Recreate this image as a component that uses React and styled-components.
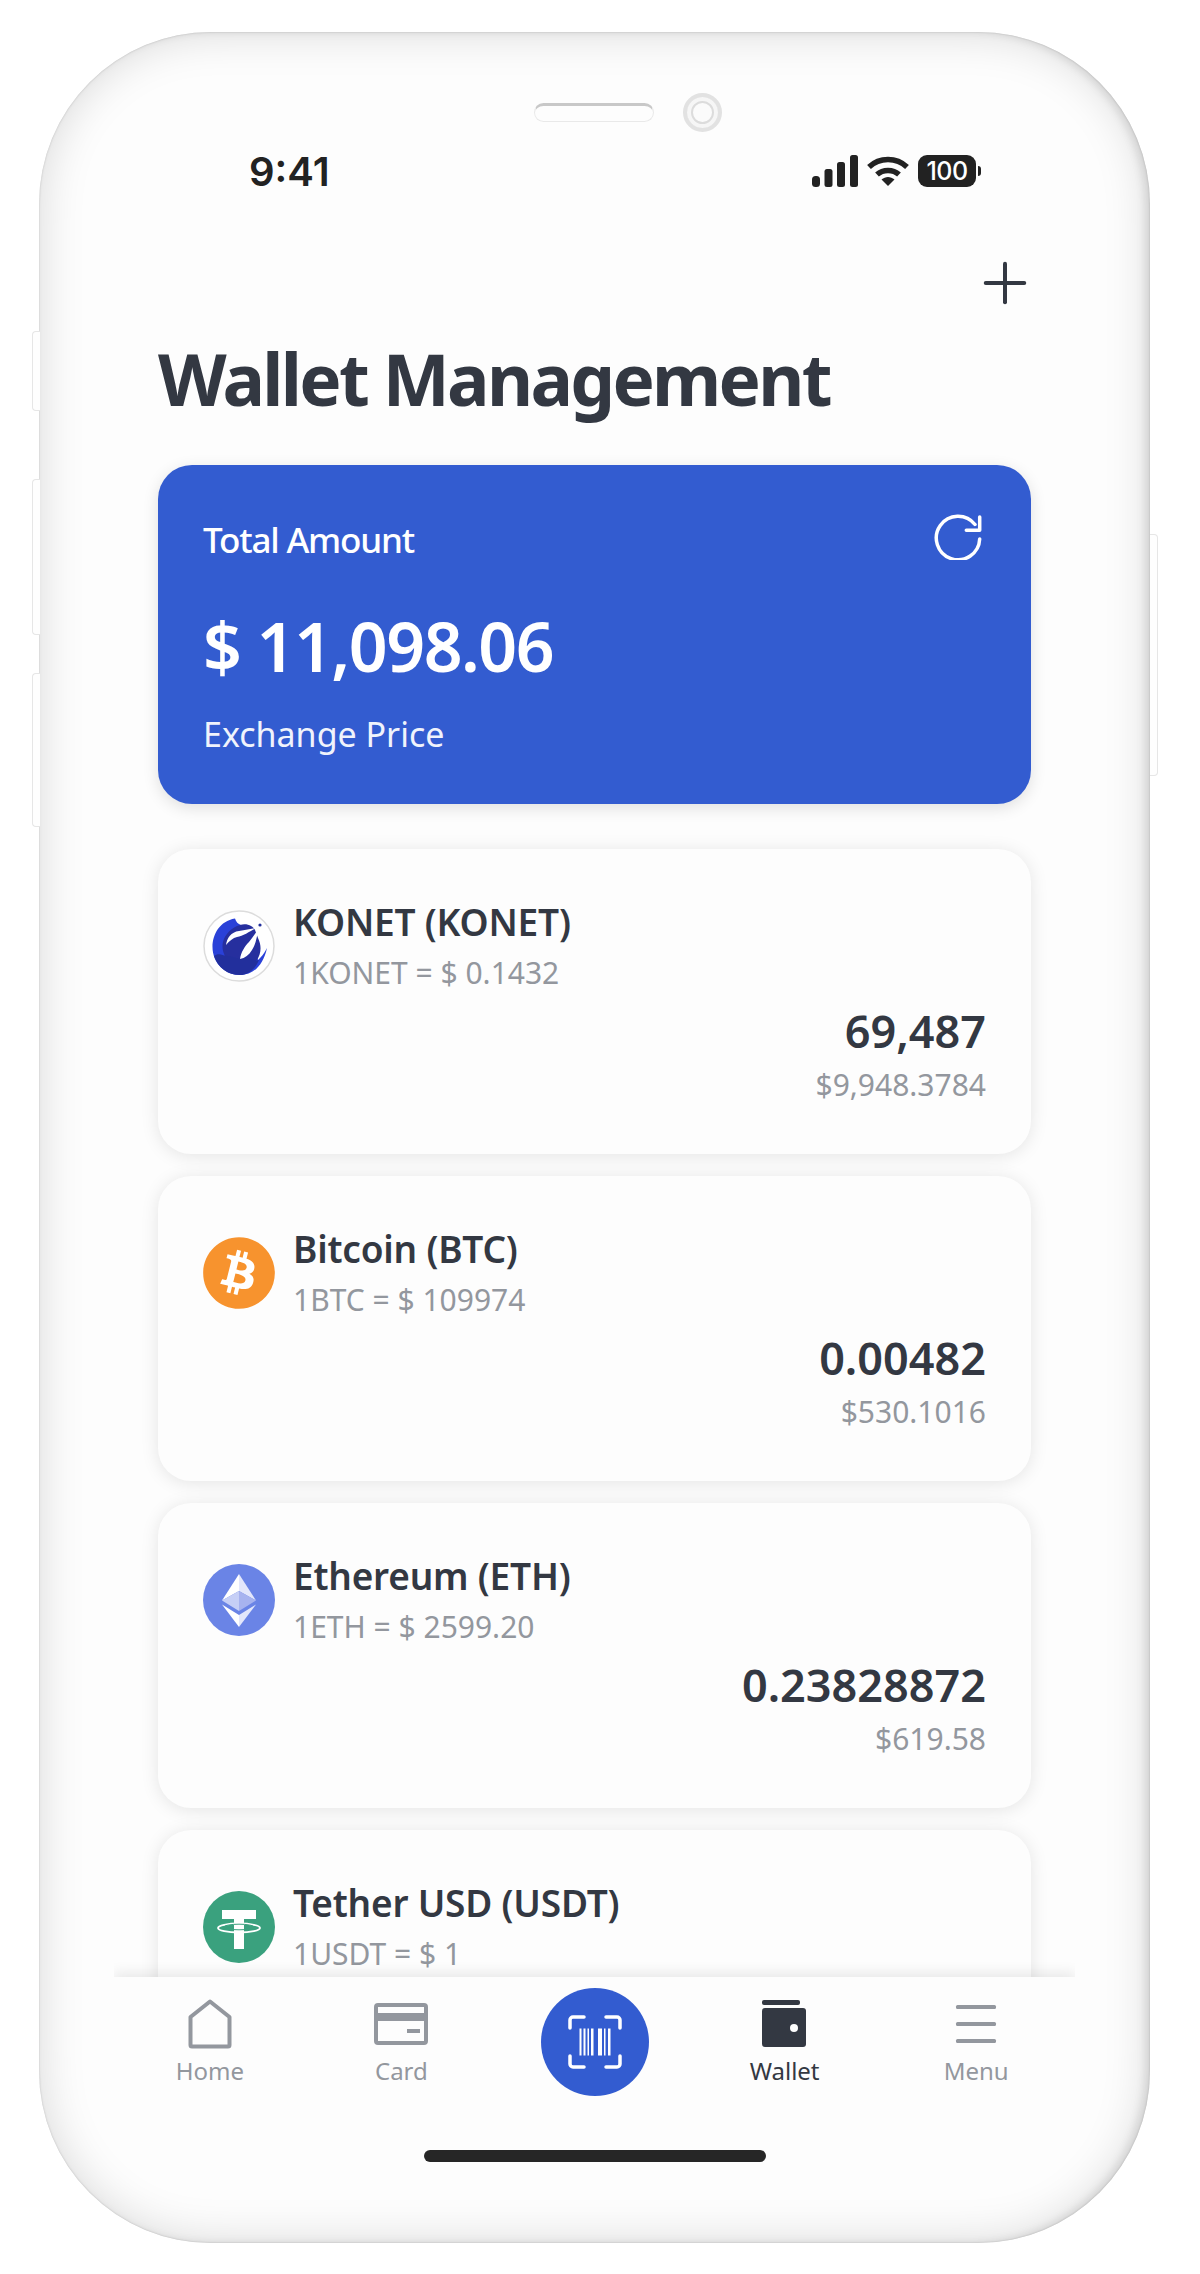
import React from 'react'
import styled, { createGlobalStyle } from 'styled-components'
import { FaBitcoin } from 'react-icons/fa'
import { Plus } from 'lucide-react'

const GlobalStyle = createGlobalStyle`
  html, body { margin: 0; padding: 0; background: #fff; }
  body { font-family: "Noto Sans", "Open Sans", sans-serif; color: #333842; }
  * { box-sizing: border-box; }
`

const Page = styled.div`
  width: 1200px;
  height: 2274px;
  padding: 32px 50px 31px 39px;
  overflow: hidden;
`

const Phone = styled.div`
  position: relative;
  height: 100%;
  padding: 0 75px;
  border-radius: 172px;
  background: #fdfdfd;
  box-shadow:
    inset 0 0 46px rgba(0, 0, 0, 0.15),
    inset -5px 0 9px rgba(0, 0, 0, 0.1),
    inset 0 0 2px rgba(0, 0, 0, 0.2);
  display: flex;
  flex-direction: column;
`

const SideButton = styled.span`
  position: absolute;
  top: ${p => p.$top}px;
  height: ${p => p.$height}px;
  width: 8px;
  background: #fefefe;
  border: 1px solid #e6e6e6;
  ${p => (p.$right
    ? 'right: -8px; border-left: 0; border-radius: 0 4px 4px 0;'
    : 'left: -7px; border-right: 0; border-radius: 4px 0 0 4px;')}
`

const Sensors = styled.div`
  flex: none;
  height: 39px;
  margin: 61px 0 0 66px;
  display: flex;
  align-items: center;
  justify-content: center;
  gap: 29px;
`

const Speaker = styled.span`
  width: 120px;
  height: 19px;
  border-radius: 10px;
  background: #fdfdfd;
  border: 1px solid #e9e9e9;
  border-top: 3px solid #c8c8c8;
`

const Camera = styled.span`
  width: 39px;
  height: 39px;
  border-radius: 50%;
  border: 4px solid #e2e2e2;
  background: #fbfbfb;
  box-shadow: inset 0 0 0 4px #f6f6f6, inset 0 0 0 6px #dcdcdc;
`

const StatusBar = styled.div`
  flex: none;
  display: flex;
  align-items: center;
  justify-content: space-between;
  padding: 0 99px 0 135px;
  height: 48px;
  margin-top: 15px;
`

const Time = styled.span`
  font-family: Inter, sans-serif;
  font-size: 40px;
  font-weight: 600;
  color: #222;
`

const StatusIcons = styled.div`
  display: flex;
  align-items: center;
  gap: 8px;
`

const Battery = styled.span`
  width: 58px;
  height: 32px;
  border-radius: 9px;
  background: #222;
  color: #fff;
  font-family: Inter, sans-serif;
  font-size: 25px;
  font-weight: 500;
  letter-spacing: -0.5px;
  display: flex;
  align-items: center;
  justify-content: center;
  position: relative;
  &::after {
    content: '';
    position: absolute;
    right: -5px;
    top: 11px;
    width: 3px;
    height: 10px;
    border-radius: 0 3px 3px 0;
    background: #222;
  }
`

const Content = styled.div`
  padding: 0 44px;
  flex: 1;
  min-height: 0;
  overflow: hidden;
  display: flex;
  flex-direction: column;
`

const AddRow = styled.div`
  flex: none;
  display: flex;
  justify-content: flex-end;
  height: 66px;
  margin: 55px -7px 0 0;
  color: #333842;
`

const Title = styled.h1`
  flex: none;
  margin: 15px 0 0;
  font-size: 71px;
  line-height: 96px;
  font-weight: 700;
  letter-spacing: -2.7px;
  color: #333842;
`

const TotalCard = styled.section`
  flex: none;
  margin-top: 38px;
  height: 339px;
  padding: 44px 44px 0 45px;
  border-radius: 34px;
  background: #335cd0;
  color: #fff;
  box-shadow: 0 4px 16px rgba(0, 0, 0, 0.12);
`

const TotalTop = styled.div`
  display: flex;
  align-items: center;
  justify-content: space-between;
  height: 60px;
`

const TotalLabel = styled.span`
  font-size: 35px;
  font-weight: 500;
  letter-spacing: -1.2px;
`

const TotalValue = styled.div`
  margin-top: 32px;
  font-size: 68px;
  line-height: 90px;
  font-weight: 600;
  letter-spacing: -1.5px;
`

const TotalNote = styled.div`
  margin-top: 20px;
  font-size: 34px;
  line-height: 46px;
  font-weight: 400;
  color: #f0f3fc;
`

const RefreshIcon = styled.svg`
  flex: none;
  margin: 0 5px 6px 0;
`

const CoinList = styled.div`
  flex: none;
  display: flex;
  flex-direction: column;
  gap: 22px;
  margin-top: 45px;
`

const CoinCard = styled.article`
  flex: none;
  height: 305px;
  padding: 50px 45px 0 45px;
  border-radius: 33px;
  background: #fdfdfd;
  box-shadow: 0 2px 18px rgba(0, 0, 0, 0.1);
`

const CoinHead = styled.div`
  display: flex;
  align-items: center;
  gap: 18px;
`

const CoinIcon = styled.span`
  flex: none;
  width: 72px;
  height: 72px;
  border-radius: 50%;
  background: ${p => p.$bg || '#fff'};
  display: flex;
  align-items: center;
  justify-content: center;
  svg { flex: none; }
`

const CoinName = styled.div`
  font-size: 37px;
  line-height: 46px;
  font-weight: 600;
  letter-spacing: -0.2px;
  color: #333842;
`

const CoinRate = styled.div`
  margin-top: 8px;
  font-size: 30px;
  line-height: 40px;
  color: #93979e;
`

const CoinAmount = styled.div`
  margin-top: 5px;
  text-align: right;
`

const AmountValue = styled.div`
  font-size: 45px;
  line-height: 66px;
  font-weight: 600;
  color: #333842;
`

const AmountFiat = styled.div`
  margin-top: 1px;
  font-size: 30px;
  line-height: 40px;
  color: #93979e;
`

const NavBar = styled.nav`
  position: relative;
  flex: none;
  height: 157px;
  padding-right: 3px;
  display: grid;
  grid-template-columns: repeat(5, 1fr);
  background: #fdfdfd;
  box-shadow: 0 -5px 12px rgba(0, 0, 0, 0.08);
  clip-path: inset(-24px 0 0 0);
`

const NavItem = styled.div`
  display: flex;
  flex-direction: column;
  align-items: center;
  padding-top: 21px;
  color: ${p => (p.$active ? '#333842' : '#93979e')};
`

const NavIcon = styled.span`
  height: 52px;
  display: flex;
  align-items: center;
  justify-content: center;
`

const NavLabel = styled.span`
  margin-top: 4px;
  font-size: 24px;
  line-height: 34px;
`

const ScanCell = styled.div`
  display: flex;
  justify-content: center;
  padding: 11px 0 0 5px;
`

const ScanButton = styled.span`
  width: 108px;
  height: 108px;
  border-radius: 50%;
  background: #335cd0;
  display: flex;
  align-items: center;
  justify-content: center;
`

const HomeIndicatorRow = styled.div`
  flex: none;
  height: 109px;
  padding-top: 16px;
  display: flex;
  justify-content: center;
`

const HomeIndicator = styled.span`
  width: 342px;
  height: 12px;
  border-radius: 6px;
  background: #262626;
`

const SignalIcon = () => (
  <svg width="46" height="32" viewBox="0 0 46 32" fill="#222">
    <rect x="0" y="21" width="8" height="11" rx="3.5" />
    <rect x="12.5" y="14" width="8" height="18" rx="2.5" />
    <rect x="25" y="7" width="8" height="25" rx="2.5" />
    <rect x="38" y="0" width="8" height="32" rx="2.5" />
  </svg>
)

const WifiIcon = () => (
  <svg width="44" height="32" viewBox="0 0 44 32" fill="none" stroke="#222" strokeWidth="5.5">
    <path d="M3 12C13.5 2 30.5 2 41 12" />
    <path d="M11 19.5C17 14 27 14 33 19.5" />
    <path d="M15.5 24.5 22 31l6.5-6.5C24.5 21 19.5 21 15.5 24.5Z" fill="#222" stroke="none" />
  </svg>
)

const KonetLogo = () => (
  <svg width="72" height="72" viewBox="0 0 72 72">
    <circle cx="36" cy="36" r="35" fill="#fff" stroke="#dcdcdc" strokeWidth="1.5" />
    <path d="M32 8.500C17 11 9.500 24 9.500 37C9.500 53 22 65 37 65C50 65 60 56 64 38C61 44 58 47 55 50L50 30L38 15C35 14 33 12 32 8.500Z" fill="#2a41d8" />
    <path d="M37 15C44 13 50 16 52 20L55 28C59 36 58 44 54 50C48 56 38 56 30 54C22 50 18 40 20 32C22 24 29 17 37 15Z" fill="#262f9e" />
    <path d="M11 46C16 42 20 46 25 46C30 46 34 50 40 48C46 46 50 52 56 50C52 60 44 65 37 65C25 65 15 58 11 46Z" fill="#222f9c" />
    <path d="M23 35C24 28 28 22 36 21C42 20 47 19 53 18C46 22 40 26 34 27C30 28 26 31 23 35Z" fill="#fff" />
    <path d="M37 49C38 42 42 36 46 32C49 28 52 24 55.500 19C54 26 53 34 49 40C46 45 42 48 37 49Z" fill="#fff" />
    <circle cx="57" cy="15" r="1.600" fill="#222f9c" />
  </svg>
)

const EthLogo = () => (
  <svg width="72" height="72" viewBox="0 0 72 72">
    <path d="M36 10 19 36.500 36 27Z" fill="#fff" />
    <path d="M36 10 53 36.500 36 27Z" fill="#e3e7fb" />
    <path d="M19 36.500 36 27 36 47Z" fill="#c6cff6" />
    <path d="M53 36.500 36 27 36 47Z" fill="#a7b3ef" />
    <path d="M19 40.500 36 51 36 63Z" fill="#fff" />
    <path d="M53 40.500 36 51 36 63Z" fill="#e3e7fb" />
  </svg>
)

const TetherLogo = () => (
  <svg width="72" height="72" viewBox="0 0 72 72">
    <path d="M19 19H53V28H41V58H31V28H19Z" fill="#fff" />
    <ellipse cx="36" cy="37" rx="21" ry="4.500" fill="none" stroke="#fff" strokeWidth="1.800" />
    <ellipse cx="36" cy="36" rx="15" ry="2.800" fill="none" stroke="#3aa17e" strokeWidth="1" />
  </svg>
)

const HomeIcon = () => (
  <svg width="44" height="50" viewBox="0 0 44 50" fill="none" stroke="currentColor" strokeWidth="4" strokeLinejoin="round">
    <path d="M2.500 18 22 2.500 41.500 18v28a1.500 1.500 0 0 1-1.500 1.500H4A1.500 1.500 0 0 1 2.500 46Z" />
  </svg>
)

const CardIcon = () => (
  <svg width="54" height="42" viewBox="0 0 54 42">
    <rect x="2" y="2" width="50" height="38" rx="2" fill="none" stroke="currentColor" strokeWidth="4" />
    <rect x="2" y="10" width="50" height="8" fill="currentColor" />
    <rect x="33" y="26" width="13" height="4" fill="currentColor" />
  </svg>
)

const WalletIcon = () => (
  <svg width="46" height="48" viewBox="0 0 46 48" fill="currentColor">
    <rect x="0" y="0" width="38" height="5" rx="2" />
    <rect x="0" y="8" width="44" height="39" rx="3" />
    <circle cx="32" cy="28" r="4" fill="#fdfdfd" />
  </svg>
)

const MenuIcon = () => (
  <svg width="46" height="42" viewBox="0 0 46 42" fill="currentColor">
    <rect x="3" y="2" width="40" height="4" rx="1.500" />
    <rect x="3" y="19" width="40" height="4" rx="1.500" />
    <rect x="3" y="36" width="40" height="4" rx="1.500" />
  </svg>
)

const ScanIcon = () => (
  <svg width="56" height="56" viewBox="0 0 56 56" fill="#fff">
    <g fill="none" stroke="#fff" strokeWidth="3.500" strokeLinecap="round">
      <path d="M17 3H6a3 3 0 0 0-3 3v8" />
      <path d="M39 3h11a3 3 0 0 1 3 3v8" />
      <path d="M17 53H6a3 3 0 0 1-3-3v-8" />
      <path d="M39 53h11a3 3 0 0 0 3-3v-8" />
    </g>
    <rect x="12.500" y="14.500" width="2" height="27" />
    <rect x="16.500" y="14.500" width="2" height="27" />
    <rect x="20.500" y="14.500" width="1.500" height="27" />
    <rect x="24" y="14.500" width="2.500" height="27" />
    <rect x="31" y="14.500" width="4" height="27" />
    <rect x="37" y="14.500" width="1.500" height="27" />
    <rect x="41" y="14.500" width="2.500" height="27" />
  </svg>
)

const coins = [
  { name: 'KONET (KONET)', rate: '1KONET = $ 0.1432', amount: '69,487', fiat: '$9,948.3784', icon: <KonetLogo /> },
  { name: 'Bitcoin (BTC)', rate: '1BTC = $ 109974', amount: '0.00482', fiat: '$530.1016', icon: <FaBitcoin size={74} color="#f7932e" /> },
  { name: 'Ethereum (ETH)', rate: '1ETH = $ 2599.20', amount: '0.23828872', fiat: '$619.58', bg: '#6a84e6', icon: <EthLogo /> },
  { name: 'Tether USD (USDT)', rate: '1USDT = $ 1', bg: '#3aa17e', icon: <TetherLogo /> },
]

const navLeft = [
  { label: 'Home', icon: <HomeIcon /> },
  { label: 'Card', icon: <CardIcon /> },
]

const navRight = [
  { label: 'Wallet', icon: <WalletIcon />, active: true },
  { label: 'Menu', icon: <MenuIcon /> },
]

const renderNav = item => (
  <NavItem key={item.label} $active={item.active}>
    <NavIcon>{item.icon}</NavIcon>
    <NavLabel>{item.label}</NavLabel>
  </NavItem>
)

const App = () => (
  <Page>
    <GlobalStyle />
    <Phone>
      <SideButton $top={299} $height={80} />
      <SideButton $top={447} $height={156} />
      <SideButton $top={641} $height={154} />
      <SideButton $right $top={502} $height={242} />
      <Sensors>
        <Speaker />
        <Camera />
      </Sensors>
      <StatusBar>
        <Time>9:41</Time>
        <StatusIcons>
          <SignalIcon />
          <WifiIcon />
          <Battery>100</Battery>
        </StatusIcons>
      </StatusBar>
      <Content>
        <AddRow>
          <Plus size={66} strokeWidth={1.45} />
        </AddRow>
        <Title>Wallet Management</Title>
        <TotalCard>
          <TotalTop>
            <TotalLabel>Total Amount</TotalLabel>
            <RefreshIcon width="48" height="48" viewBox="0 0 48 48" fill="none" stroke="#fff" strokeWidth="3.5" strokeLinecap="round" strokeLinejoin="round">
              <path d="M45.700 27A21.700 21.700 0 1 1 41 12.500" />
              <path d="M45.700 5V18.300H32.300" />
            </RefreshIcon>
          </TotalTop>
          <TotalValue>$ 11,098.06</TotalValue>
          <TotalNote>Exchange Price</TotalNote>
        </TotalCard>
        <CoinList>
          {coins.map(coin => (
            <CoinCard key={coin.name}>
              <CoinHead>
                <CoinIcon $bg={coin.bg}>{coin.icon}</CoinIcon>
                <div>
                  <CoinName>{coin.name}</CoinName>
                  <CoinRate>{coin.rate}</CoinRate>
                </div>
              </CoinHead>
              {coin.amount && (
                <CoinAmount>
                  <AmountValue>{coin.amount}</AmountValue>
                  <AmountFiat>{coin.fiat}</AmountFiat>
                </CoinAmount>
              )}
            </CoinCard>
          ))}
        </CoinList>
      </Content>
      <NavBar>
        {navLeft.map(renderNav)}
        <ScanCell>
          <ScanButton>
            <ScanIcon />
          </ScanButton>
        </ScanCell>
        {navRight.map(renderNav)}
      </NavBar>
      <HomeIndicatorRow>
        <HomeIndicator />
      </HomeIndicatorRow>
    </Phone>
  </Page>
)

export default App
